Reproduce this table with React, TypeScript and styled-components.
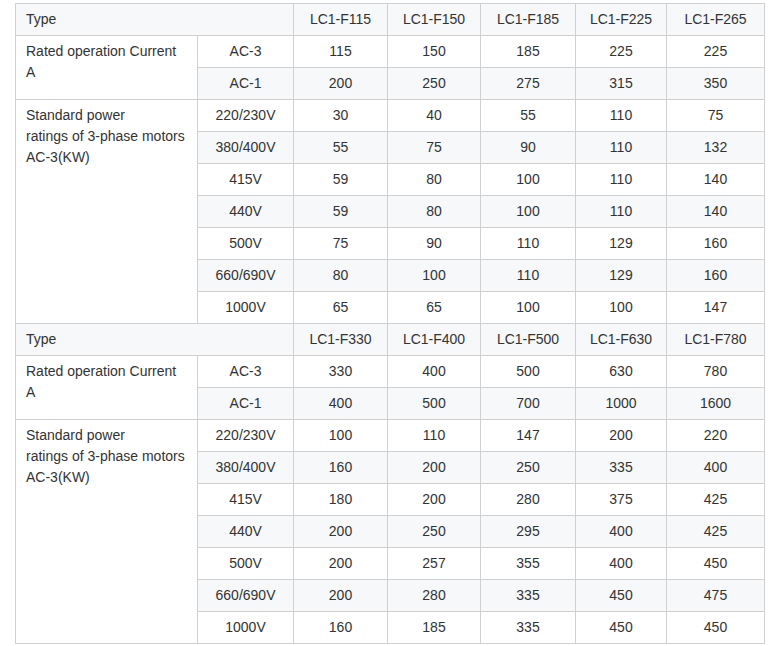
import React from "react";
import styled, { createGlobalStyle } from "styled-components";

const GlobalStyle = createGlobalStyle`
  body {
    margin: 0;
    background: #ffffff;
    font-family: "Liberation Sans", Arial, sans-serif;
  }
`;

const Page = styled.div`
  padding: 3px 0 0 15px;
`;

const Table = styled.table`
  border-collapse: collapse;
  table-layout: fixed;
  width: 749px;
  font-size: 14px;
  line-height: 21px;
  color: #333333;
  tbody tr:nth-child(2n + 1) {
    background: #f6f8fa;
  }
`;

const Cell = styled.td<{ $left?: boolean; $white?: boolean }>`
  border: 1px solid #d0d0d0;
  padding: 5px 10px;
  text-align: ${(p) => (p.$left ? "left" : "center")};
  vertical-align: ${(p) => (p.$left ? "top" : "middle")};
  background: ${(p) => (p.$white ? "#ffffff" : "inherit")};
  white-space: nowrap;
`;

interface IBlock {
  models: string[];
  ac3: string[];
  ac1: string[];
  power: [string, string[]][];
}

const blocks: IBlock[] = [
  {
    models: ["LC1-F115", "LC1-F150", "LC1-F185", "LC1-F225", "LC1-F265"],
    ac3: ["115", "150", "185", "225", "225"],
    ac1: ["200", "250", "275", "315", "350"],
    power: [
      ["220/230V", ["30", "40", "55", "110", "75"]],
      ["380/400V", ["55", "75", "90", "110", "132"]],
      ["415V", ["59", "80", "100", "110", "140"]],
      ["440V", ["59", "80", "100", "110", "140"]],
      ["500V", ["75", "90", "110", "129", "160"]],
      ["660/690V", ["80", "100", "110", "129", "160"]],
      ["1000V", ["65", "65", "100", "100", "147"]],
    ],
  },
  {
    models: ["LC1-F330", "LC1-F400", "LC1-F500", "LC1-F630", "LC1-F780"],
    ac3: ["330", "400", "500", "630", "780"],
    ac1: ["400", "500", "700", "1000", "1600"],
    power: [
      ["220/230V", ["100", "110", "147", "200", "220"]],
      ["380/400V", ["160", "200", "250", "335", "400"]],
      ["415V", ["180", "200", "280", "375", "425"]],
      ["440V", ["200", "250", "295", "400", "425"]],
      ["500V", ["200", "257", "355", "400", "450"]],
      ["660/690V", ["200", "280", "335", "450", "475"]],
      ["1000V", ["160", "185", "335", "450", "450"]],
    ],
  },
];

const widths = [182, 96, 94, 93, 95, 91, 98];

const Values = ({ items }: { items: string[] }) => (
  <>
    {items.map((v, i) => (
      <Cell key={i}>{v}</Cell>
    ))}
  </>
);

const App: React.FC = () => {
  const rows: React.ReactNode[] = [];
  blocks.forEach((b, bi) => {
    rows.push(
      <tr key={`t${bi}`}>
        <Cell $left colSpan={2}>
          Type
        </Cell>
        <Values items={b.models} />
      </tr>
    );
    rows.push(
      <tr key={`a3${bi}`}>
        <Cell $left $white rowSpan={2}>
          Rated operation Current
          <br />A
        </Cell>
        <Cell>AC-3</Cell>
        <Values items={b.ac3} />
      </tr>
    );
    rows.push(
      <tr key={`a1${bi}`}>
        <Cell>AC-1</Cell>
        <Values items={b.ac1} />
      </tr>
    );
    b.power.forEach(([volt, vals], pi) => {
      rows.push(
        <tr key={`p${bi}-${pi}`}>
          {pi === 0 && (
            <Cell $left $white rowSpan={b.power.length}>
              Standard power
              <br />
              ratings of 3-phase motors
              <br />
              AC-3(KW)
            </Cell>
          )}
          <Cell>{volt}</Cell>
          <Values items={vals} />
        </tr>
      );
    });
  });

  return (
    <Page>
      <GlobalStyle />
      <Table>
        <colgroup>
          {widths.map((w, i) => (
            <col key={i} style={{ width: w }} />
          ))}
        </colgroup>
        <tbody>{rows}</tbody>
      </Table>
    </Page>
  );
};

export default App;
